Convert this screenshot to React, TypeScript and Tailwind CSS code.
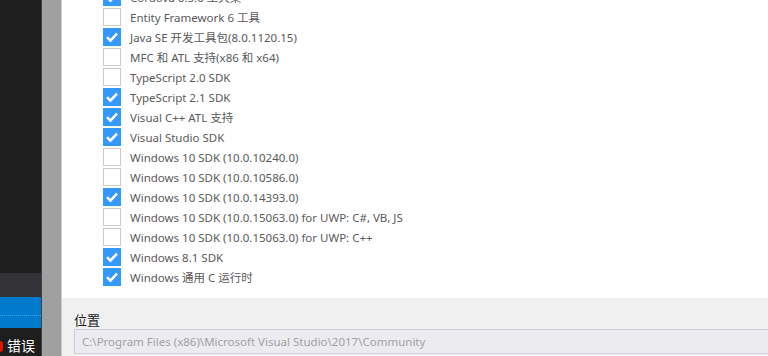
const items: { label: string; checked: boolean }[] = [
  { label: "Cordova 6.5.0 工具集", checked: true },
  { label: "Entity Framework 6 工具", checked: false },
  { label: "Java SE 开发工具包(8.0.1120.15)", checked: true },
  { label: "MFC 和 ATL 支持(x86 和 x64)", checked: false },
  { label: "TypeScript 2.0 SDK", checked: false },
  { label: "TypeScript 2.1 SDK", checked: true },
  { label: "Visual C++ ATL 支持", checked: true },
  { label: "Visual Studio SDK", checked: true },
  { label: "Windows 10 SDK (10.0.10240.0)", checked: false },
  { label: "Windows 10 SDK (10.0.10586.0)", checked: false },
  { label: "Windows 10 SDK (10.0.14393.0)", checked: true },
  { label: "Windows 10 SDK (10.0.15063.0) for UWP: C#, VB, JS", checked: false },
  { label: "Windows 10 SDK (10.0.15063.0) for UWP: C++", checked: false },
  { label: "Windows 8.1 SDK", checked: true },
  { label: "Windows 通用 C 运行时", checked: true },
];

const CheckBox = ({ checked }: { checked: boolean }) =>
  checked ? (
    <div className="w-[18px] h-[18px] bg-[#3399ff] flex items-center justify-center shrink-0">
      <svg width="18" height="18" viewBox="0 0 18 18">
        <path
          d="M4 9.2 L7.4 12.6 L14 5.6"
          fill="none"
          stroke="white"
          strokeWidth="2.6"
        />
      </svg>
    </div>
  ) : (
    <div className="w-[18px] h-[18px] bg-white border border-[#cccccc] shrink-0" />
  );

const App = () => {
  return (
    <div
      className="flex w-[768px] h-[356px] overflow-hidden bg-[#f0f0f0]"
      style={{ fontFamily: '"Noto Sans", "Noto Sans CJK SC", sans-serif' }}
    >
      {/* left editor remains */}
      <div className="w-[42px] h-full flex flex-col bg-[#1e1e1e] border-r border-[#3f3f46]">
        <div className="flex-1" />
        <div className="h-[24px] bg-[#333337]" />
        <div className="h-[31px] bg-[#007acc] flex flex-col justify-center">
          <div className="h-[2px] mt-[6px] border-t border-dotted border-[#4aa3e0]" />
        </div>
        <div className="h-[2px] bg-[#1e1e1e]" />
        <div className="h-[26px] bg-[#1e1e1e] flex items-center gap-[4px] -ml-[4px] pt-[6px]">
          <span className="w-[7px] h-[11px] rounded-full bg-[#e51400] shrink-0" />
          <span className="text-white text-[14px] leading-none">错误</span>
        </div>
      </div>
      {/* splitter strip */}
      <div className="w-[20px] h-full bg-[#a0a0a0] border-r border-[#cdc9da]" />
      {/* main panel */}
      <div className="flex-1 flex flex-col">
        <div className="h-[298px] bg-white overflow-hidden">
          <div className="-mt-[13px] pl-[41px]">
            {items.map((item) => (
              <div key={item.label} className="h-5 flex items-center gap-[9px]">
                <CheckBox checked={item.checked} />
                <span className="text-[11.5px] text-[#5a5a5a] whitespace-nowrap pt-[1px]">
                  {item.label}
                </span>
              </div>
            ))}
          </div>
        </div>
        <div className="flex-1 pl-[12px] pt-[14px]">
          <div className="text-[13px] text-[#1e1e1e] leading-[17px]">位置</div>
          <div className="h-[25px] bg-[#ecebf0] border border-[#cccedb] border-r-0 flex items-center pl-[7px]">
            <span className="text-[11.5px] text-[#a2a2a2] whitespace-nowrap">
              C:\Program Files (x86)\Microsoft Visual Studio\2017\Community
            </span>
          </div>
        </div>
      </div>
    </div>
  );
};

export default App;
